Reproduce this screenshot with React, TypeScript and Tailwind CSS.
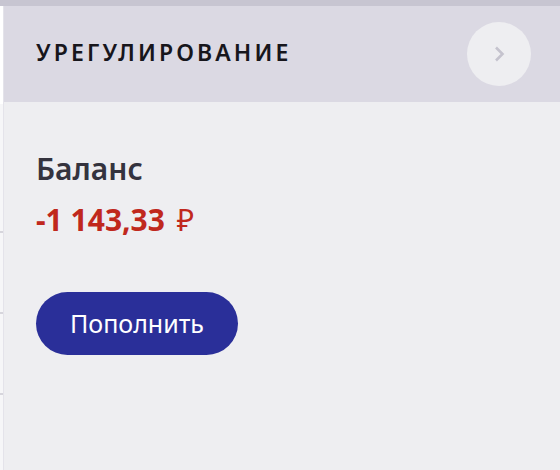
import React from "react";

const font = { fontFamily: '"Noto Sans", "Open Sans", sans-serif' };

const App = () => {
  return (
    <div className="w-[560px] h-[470px] flex flex-col bg-[#eeeef1] overflow-hidden" style={font}>
      <div className="h-[6px] bg-[#c7c5d1]" />
      <div className="flex flex-1">
        <div className="relative w-[4px] bg-[#f6f6f8] border-r border-[#e4e3ea]">
          <div className="h-[98px] bg-white" />
          <div className="absolute left-0 top-[225px] w-[3px] h-[2px] bg-[#d6d5dc]" />
          <div className="absolute left-0 top-[306px] w-[3px] h-[2px] bg-[#d6d5dc]" />
          <div className="absolute left-0 top-[387px] w-[3px] h-[2px] bg-[#d6d5dc]" />
        </div>
        <div className="flex-1 flex flex-col">
          <div className="h-[96px] bg-[#dbd9e3] flex items-center justify-between pl-[32px] pr-[29px]">
            <h2 className="text-[23px] leading-[30px] mb-[5px] font-semibold tracking-[0.135em] text-[#17161c]">
              УРЕГУЛИРОВАНИЕ
            </h2>
            <button className="w-[64px] h-[64px] rounded-full bg-[#eeeef1] flex items-center justify-center">
              <svg width="16" height="16" viewBox="0 0 16 16" fill="none">
                <path d="M5 1.5 L11.5 8 L5 14.5" stroke="#c5c3ce" strokeWidth="2.6" />
              </svg>
            </button>
          </div>
          <div className="pl-[32px] pt-[47px]">
            <div className="text-[30px] leading-[40px] font-semibold text-[#34333e]">Баланс</div>
            <div className="mt-[11px] text-[30px] leading-[40px] font-bold text-[#c0281d]">
              -1 143,33 <span className="ml-[4px] font-normal">₽</span>
            </div>
            <button className="mt-[52px] h-[63px] px-[34px] rounded-full bg-[#2a2f99] text-white text-[25px]">
              Пополнить
            </button>
          </div>
        </div>
      </div>
    </div>
  );
};

export default App;
